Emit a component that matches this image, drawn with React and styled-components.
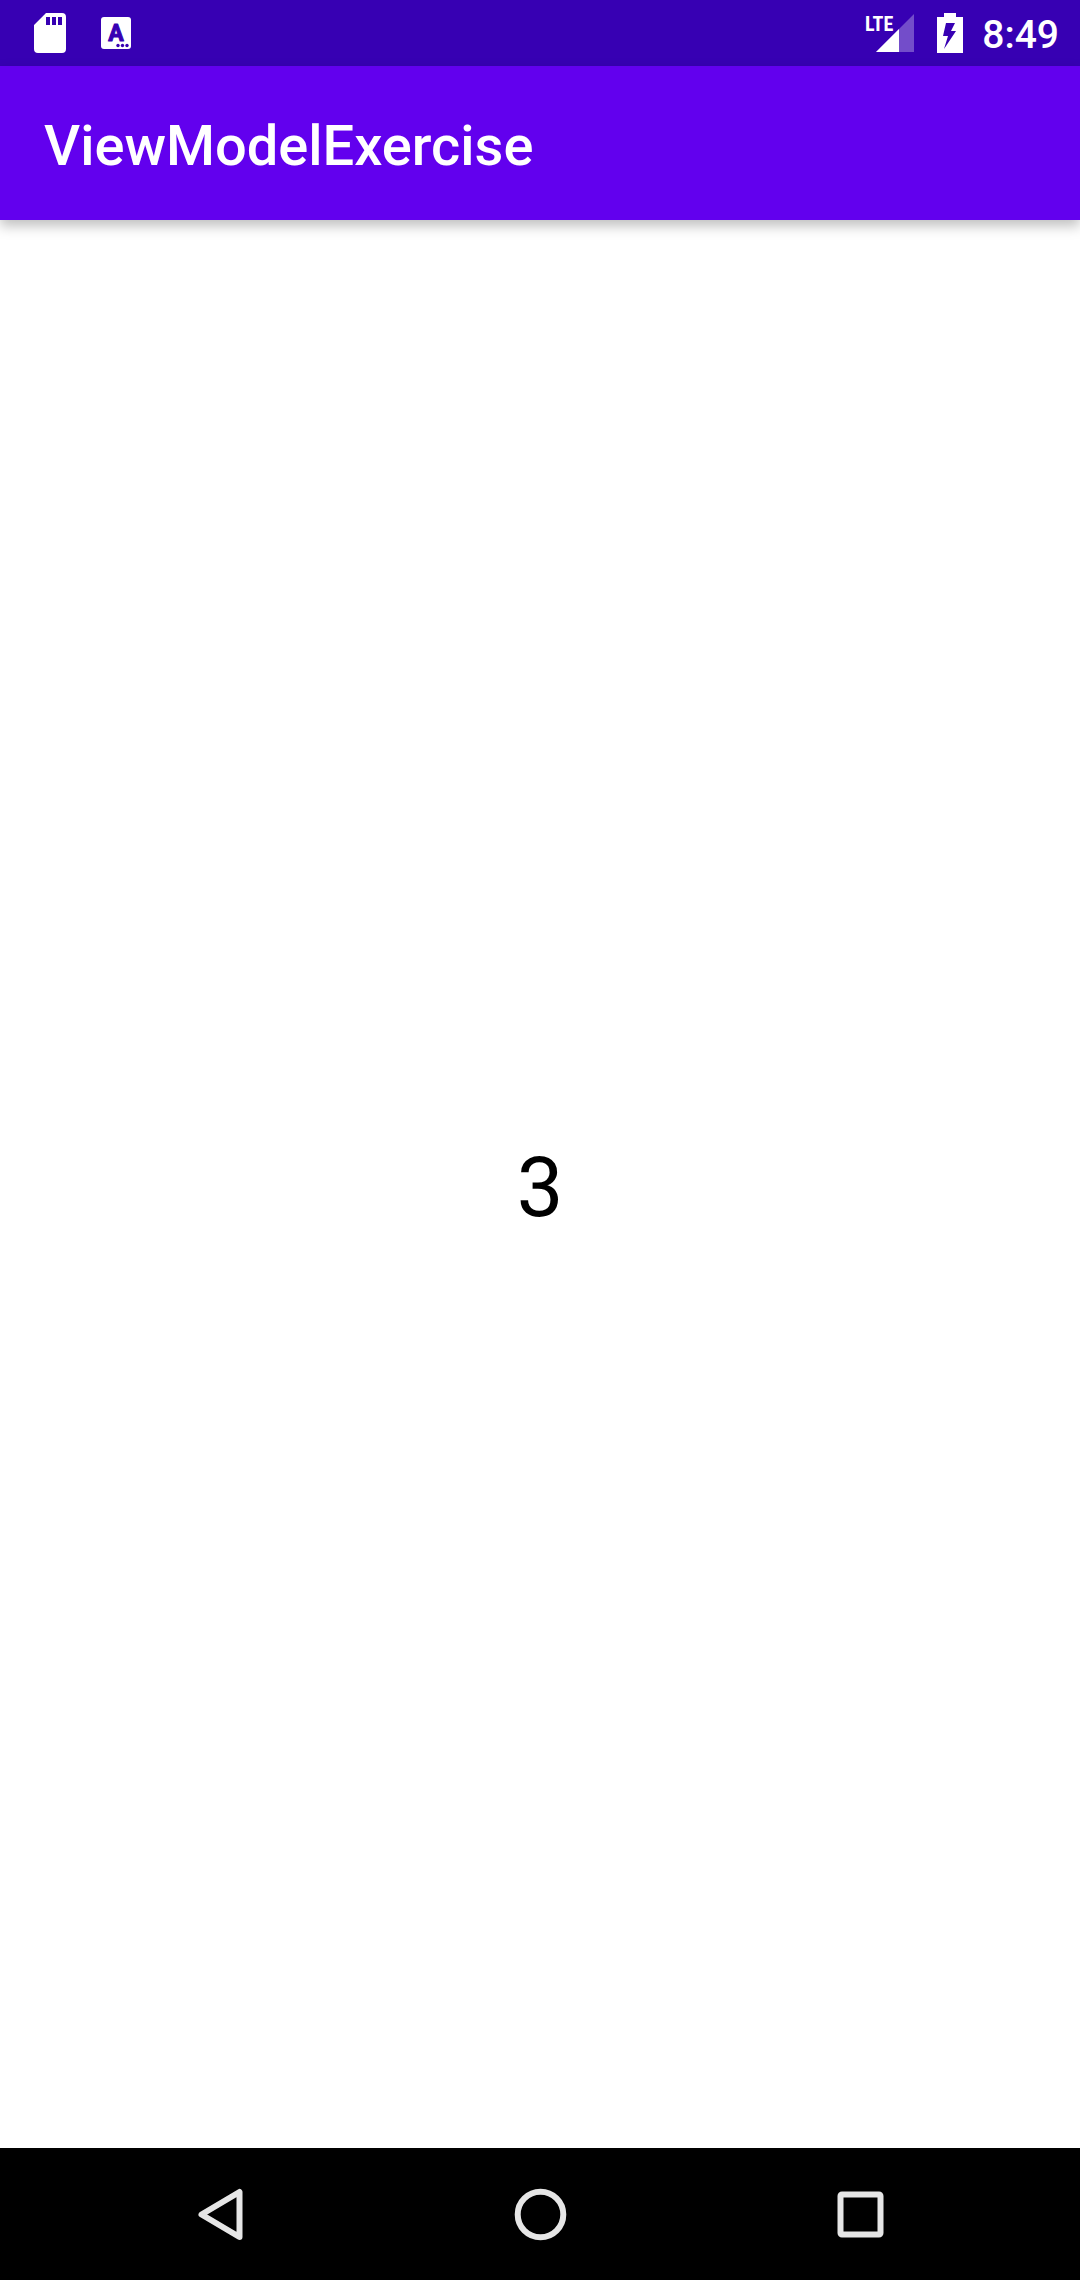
import React from 'react';
import styled, { createGlobalStyle } from 'styled-components';

const GlobalStyle = createGlobalStyle`
  *, *::before, *::after { box-sizing: border-box; }
  body { margin: 0; background: #ffffff; font-family: Roboto, "Noto Sans", sans-serif; }
`;

const Screen = styled.div`
  display: flex;
  flex-direction: column;
  min-height: 100vh;
`;

const StatusBar = styled.header`
  display: flex;
  align-items: center;
  justify-content: space-between;
  height: 66px;
  padding: 0 21px 0 34px;
  background: #3700b3;
  color: #ffffff;
`;

const StatusGroup = styled.div`
  display: flex;
  align-items: center;
  gap: ${({ $gap }) => $gap}px;
`;

const StatusIcon = styled.svg`
  display: block;
  fill: #ffffff;
`;

const SvgText = styled.text`
  font-family: ${({ $family }) => $family};
  font-weight: 700;
  font-size: ${({ $size }) => $size}px;
`;

const Clock = styled.time`
  font-size: 39px;
  font-weight: 500;
  line-height: 46px;
  padding-top: 4px;
`;

const AppBar = styled.div`
  position: relative;
  display: flex;
  align-items: center;
  height: 154px;
  padding: 6px 44px 0;
  background: #6200ee;
  box-shadow: 0 6px 12px rgba(0, 0, 0, 0.25);
`;

const Title = styled.h1`
  margin: 0;
  color: #ffffff;
  font-size: 56px;
  font-weight: 500;
  line-height: 64px;
`;

const Content = styled.main`
  display: flex;
  flex: 1;
  align-items: center;
  justify-content: center;
  padding-top: 8px;
`;

const Counter = styled.output`
  color: #000000;
  font-size: 83px;
  line-height: 98px;
`;

const NavBar = styled.nav`
  display: flex;
  height: 132px;
  padding: 0 60px;
  background: #000000;
`;

const NavButton = styled.button`
  display: flex;
  flex: 1;
  align-items: center;
  justify-content: center;
  padding: 0;
  border: 0;
  background: none;
  cursor: pointer;
`;

const NavIcon = styled.svg`
  fill: none;
  stroke: #e6e6e6;
  stroke-width: 6;
  stroke-linejoin: round;
`;

const SdCardIcon = () => (
  <StatusIcon width="32" height="40" viewBox="0 0 32 40" aria-hidden="true">
    <path fillRule="evenodd" d="M12 0H28Q32 0 32 4V36Q32 40 28 40H4Q0 40 0 36V12ZM12 4V12H16V4ZM18 4V12H22V4ZM24 4V12H28V4Z" />
  </StatusIcon>
);

const KeyboardIcon = () => (
  <StatusIcon width="30" height="40" viewBox="0 0 30 40" aria-hidden="true">
    <rect y="4" width="30" height="32" rx="3" />
    <SvgText $family="Roboto, sans-serif" $size={23} x="15" y="28" textAnchor="middle" fill="#3700b3" stroke="#3700b3" strokeLinejoin="round">A</SvgText>
    <g fill="#3700b3">
      <circle cx="17" cy="32.5" r="1.7" />
      <circle cx="21.5" cy="32.5" r="1.7" />
      <circle cx="26" cy="32.5" r="1.7" />
    </g>
  </StatusIcon>
);

const SignalIcon = () => (
  <StatusIcon width="50" height="40" viewBox="0 0 50 40" role="img" aria-label="LTE signal">
    <path d="M50 1V39H12Z" fillOpacity="0.3" />
    <path d="M35 16V39H12Z" />
    <SvgText $family='"Liberation Sans Narrow", "Roboto Condensed", Roboto, sans-serif' $size={20} x="1" y="18">LTE</SvgText>
  </StatusIcon>
);

const BatteryIcon = () => (
  <StatusIcon width="26" height="40" viewBox="0 0 26 40" role="img" aria-label="Battery charging">
    <path fillRule="evenodd" d="M7 0H19V4H26V40H0V4H7ZM9 10L6 23H11L7 36L19 18H14L18 10Z" />
  </StatusIcon>
);

const BackIcon = () => (
  <NavIcon width="56" height="56" viewBox="0 0 56 56" aria-hidden="true">
    <path d="M47.5 6V51L9.5 28.5Z" />
  </NavIcon>
);

const HomeIcon = () => (
  <NavIcon width="56" height="56" viewBox="0 0 56 56" aria-hidden="true">
    <circle cx="28.5" cy="28.5" r="22.8" />
  </NavIcon>
);

const RecentsIcon = () => (
  <NavIcon width="56" height="56" viewBox="0 0 56 56" aria-hidden="true">
    <rect x="8.5" y="8.5" width="40" height="40" rx="1.5" />
  </NavIcon>
);

export default function App() {
  return (
    <>
      <GlobalStyle />
      <Screen>
        <StatusBar>
          <StatusGroup $gap={35}>
            <SdCardIcon />
            <KeyboardIcon />
          </StatusGroup>
          <StatusGroup $gap={19}>
            <StatusGroup $gap={23}>
              <SignalIcon />
              <BatteryIcon />
            </StatusGroup>
            <Clock>8:49</Clock>
          </StatusGroup>
        </StatusBar>
        <AppBar>
          <Title>ViewModelExercise</Title>
        </AppBar>
        <Content>
          <Counter>3</Counter>
        </Content>
        <NavBar aria-label="System navigation">
          <NavButton type="button" aria-label="Back"><BackIcon /></NavButton>
          <NavButton type="button" aria-label="Home"><HomeIcon /></NavButton>
          <NavButton type="button" aria-label="Recent apps"><RecentsIcon /></NavButton>
        </NavBar>
      </Screen>
    </>
  );
}
